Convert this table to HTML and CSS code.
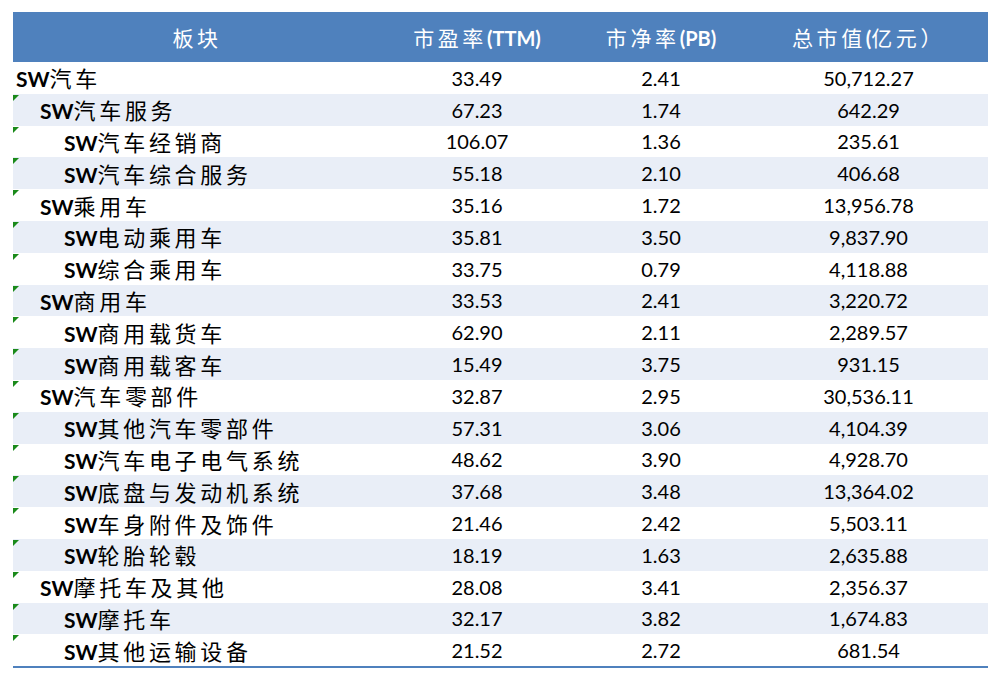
FILE: index.html
```html
<!DOCTYPE html>
<html lang="zh">
<head>
<meta charset="utf-8">
<link rel="stylesheet" href="styles.css">
</head>
<body>
<table class="grid">
  <colgroup>
    <col class="c-name"><col class="c-pe"><col class="c-pb"><col class="c-cap">
  </colgroup>
  <thead>
    <tr>
      <th><span class="cj">板块</span></th>
      <th><span class="cj">市盈率</span><b>(TTM)</b></th>
      <th><span class="cj">市净率</span><b>(PB)</b></th>
      <th><span class="cj">总市值</span><b>(</b><span class="cj">亿元）</span></th>
    </tr>
  </thead>
  <tbody>
    <tr><td class="name l1"><b>SW</b><span class="cj">汽车</span></td><td>33.49</td><td>2.41</td><td>50,712.27</td></tr>
    <tr class="alt flag"><td class="name l2"><b>SW</b><span class="cj">汽车服务</span></td><td>67.23</td><td>1.74</td><td>642.29</td></tr>
    <tr class="flag"><td class="name l3"><b>SW</b><span class="cj">汽车经销商</span></td><td>106.07</td><td>1.36</td><td>235.61</td></tr>
    <tr class="alt flag"><td class="name l3"><b>SW</b><span class="cj">汽车综合服务</span></td><td>55.18</td><td>2.10</td><td>406.68</td></tr>
    <tr class="flag"><td class="name l2"><b>SW</b><span class="cj">乘用车</span></td><td>35.16</td><td>1.72</td><td>13,956.78</td></tr>
    <tr class="alt flag"><td class="name l3"><b>SW</b><span class="cj">电动乘用车</span></td><td>35.81</td><td>3.50</td><td>9,837.90</td></tr>
    <tr class="flag"><td class="name l3"><b>SW</b><span class="cj">综合乘用车</span></td><td>33.75</td><td>0.79</td><td>4,118.88</td></tr>
    <tr class="alt flag"><td class="name l2"><b>SW</b><span class="cj">商用车</span></td><td>33.53</td><td>2.41</td><td>3,220.72</td></tr>
    <tr class="flag"><td class="name l3"><b>SW</b><span class="cj">商用载货车</span></td><td>62.90</td><td>2.11</td><td>2,289.57</td></tr>
    <tr class="alt flag"><td class="name l3"><b>SW</b><span class="cj">商用载客车</span></td><td>15.49</td><td>3.75</td><td>931.15</td></tr>
    <tr class="flag"><td class="name l2"><b>SW</b><span class="cj">汽车零部件</span></td><td>32.87</td><td>2.95</td><td>30,536.11</td></tr>
    <tr class="alt flag"><td class="name l3"><b>SW</b><span class="cj">其他汽车零部件</span></td><td>57.31</td><td>3.06</td><td>4,104.39</td></tr>
    <tr class="flag"><td class="name l3"><b>SW</b><span class="cj">汽车电子电气系统</span></td><td>48.62</td><td>3.90</td><td>4,928.70</td></tr>
    <tr class="alt flag"><td class="name l3"><b>SW</b><span class="cj">底盘与发动机系统</span></td><td>37.68</td><td>3.48</td><td>13,364.02</td></tr>
    <tr class="flag"><td class="name l3"><b>SW</b><span class="cj">车身附件及饰件</span></td><td>21.46</td><td>2.42</td><td>5,503.11</td></tr>
    <tr class="alt flag"><td class="name l3"><b>SW</b><span class="cj">轮胎轮毂</span></td><td>18.19</td><td>1.63</td><td>2,635.88</td></tr>
    <tr class="flag"><td class="name l2"><b>SW</b><span class="cj">摩托车及其他</span></td><td>28.08</td><td>3.41</td><td>2,356.37</td></tr>
    <tr class="alt flag"><td class="name l3"><b>SW</b><span class="cj">摩托车</span></td><td>32.17</td><td>3.82</td><td>1,674.83</td></tr>
    <tr class="flag"><td class="name l3"><b>SW</b><span class="cj">其他运输设备</span></td><td>21.52</td><td>2.72</td><td>681.54</td></tr>
  </tbody>
</table>
</body>
</html>
```

FILE: styles.css
```css
html, body {
  margin: 0;
  padding: 0;
  background: #ffffff;
}
body {
  padding: 12px 0 0 13px;
  font-family: Lato, "Noto Sans CJK SC", sans-serif;
  color: #000;
}
.grid {
  border-collapse: collapse;
  table-layout: fixed;
  width: 975px;
  border-bottom: 2px solid #4f81bd;
}
.c-name { width: 368px; }
.c-pe { width: 192px; }
.c-pb { width: 176px; }
.c-cap { width: 239px; }

.grid th {
  background: #4f81bd;
  color: #ffffff;
  height: 50px;
  padding: 0;
  font-weight: normal;
  font-size: 21px;
  text-align: center;
  vertical-align: middle;
}
.grid th b {
  font-family: Lato, sans-serif;
  font-weight: bold;
  font-size: 20px;
}
.cj {
  font-family: "Noto Sans CJK SC", sans-serif;
  font-size: 22px;
  letter-spacing: 3.7px;
}
.grid th .cj {
  font-size: 21px;
  letter-spacing: 3.6px;
}
.grid td {
  height: 31.8px;
  padding: 0;
  font-size: 20px;
  text-align: center;
  vertical-align: middle;
  line-height: 1;
}
.grid tr.alt td {
  background: #e9eef7;
}
.grid td.name {
  text-align: left;
  font-size: 21px;
  position: relative;
}
.grid td.name b {
  font-family: Lato, sans-serif;
  font-weight: bold;
  font-size: 21px;
}
.l1 { padding-left: 3px !important; }
.l2 { padding-left: 27px !important; }
.l3 { padding-left: 51px !important; }

.flag td.name::before {
  content: "";
  position: absolute;
  left: 0;
  top: 1px;
  width: 0;
  height: 0;
  border-top: 6px solid #1a8a1a;
  border-right: 6px solid transparent;
}
```
